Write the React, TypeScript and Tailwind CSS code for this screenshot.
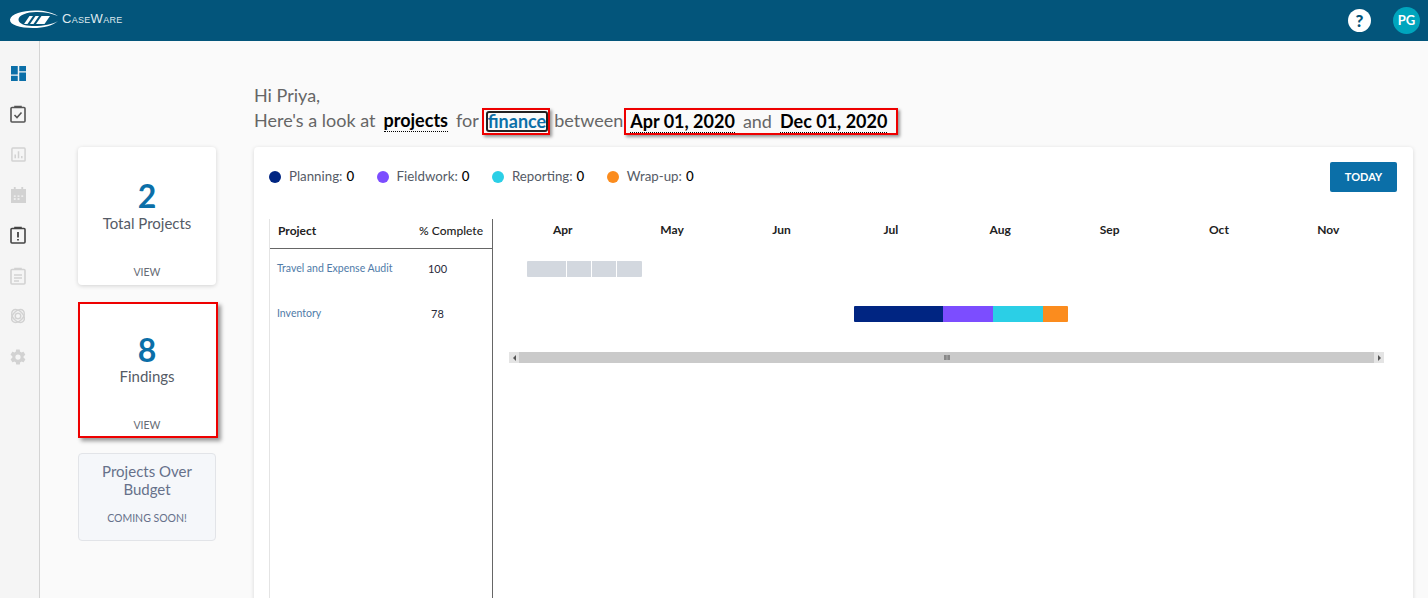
import React from 'react';

const legend = [
  { label: 'Planning:', color: 'bg-[#002582]' },
  { label: 'Fieldwork:', color: 'bg-[#7c4dff]' },
  { label: 'Reporting:', color: 'bg-[#2bcfe6]' },
  { label: 'Wrap-up:', color: 'bg-[#fb8c1e]' },
];

const months = ['Apr', 'May', 'Jun', 'Jul', 'Aug', 'Sep', 'Oct', 'Nov'];

const Logo = () => (
  <svg width="50" height="20" viewBox="0 0 50 20" className="shrink-0 -mt-[4px]">
    <path d="M1 10.500C2 5 13 1.500 26 1.500c9 0 18 2 23 5.500-6-2.500-14-4.200-22-4C18 3.200 9.500 6 9.500 10.500c0 4 6 6.300 13.500 6.500 10 .3 20-1.300 26-5-5 4.500-14 7-25 7C11 19 .5 16 1 10.500z" fill="#ffffff" />
    <path d="M15 15l5.500-8h3.500l-5.500 8zM21 15l5.500-8H30l-5.500 8zM27 15l5.500-8h8.500l-5.500 8z" fill="#ffffff" />
  </svg>
);

const DashboardIcon = () => (
  <svg width="15" height="15" viewBox="0 0 16 16">
    <path d="M0 0h7.200v9H0zM0 10.500h7.200V16H0zM8.800 0H16v5.500H8.800zM8.800 7H16v9H8.800z" fill="#0b6fa8" />
  </svg>
);

const Clipboard = ({ color, children }: { color: string; children?: React.ReactNode }) => (
  <svg width="16" height="18" viewBox="0 0 16 18" fill="none" stroke={color}>
    <rect x="1" y="2.500" width="14" height="14.500" rx="1" strokeWidth="1.600" />
    <path d="M5 3V1.500h6V3" strokeWidth="1.600" />
    {children}
  </svg>
);

const NavItem = ({ children }: { children: React.ReactNode }) => (
  <div className="h-[18px] flex items-center justify-center">{children}</div>
);

const SideNav = () => (
  <div className="w-10 shrink-0 bg-[#f5f5f5] border-r border-[#d4d4d4] flex flex-col items-center pt-[23px] pr-[3px] gap-[22.500px] h-[557px]">
    <NavItem><DashboardIcon /></NavItem>
    <NavItem>
      <Clipboard color="#555555">
        <path d="M4.500 10l2.500 2.500 4.500-5" strokeWidth="1.600" />
      </Clipboard>
    </NavItem>
    <NavItem>
      <svg width="15" height="15" viewBox="0 0 16 16" fill="none" stroke="#d2d2d2">
        <rect x="1" y="1" width="14" height="14" rx="1" strokeWidth="1.600" />
        <path d="M4.500 12V8M8 12V4.500M11.500 12V9.500" strokeWidth="1.600" />
      </svg>
    </NavItem>
    <NavItem>
      <svg width="15" height="17" viewBox="0 0 16 18">
        <path d="M0 3h3V1h2v2h6V1h2v2h3v15H0z" fill="#d2d2d2" />
        <path d="M3 10h2v1.500H3zM7 10h2v1.500H7zM11 10h2v1.500h-2zM3 13h2v1.500H3zM7 13h2v1.500H7z" fill="#f5f5f5" />
      </svg>
    </NavItem>
    <NavItem>
      <Clipboard color="#444444">
        <path d="M8 6v5.500M8 13v1.500" strokeWidth="1.800" />
      </Clipboard>
    </NavItem>
    <NavItem>
      <Clipboard color="#d2d2d2">
        <path d="M4 8h8M4 11h8M4 14h5" strokeWidth="1.300" />
      </Clipboard>
    </NavItem>
    <NavItem>
      <svg width="16" height="16" viewBox="0 0 16 16" fill="none" stroke="#d2d2d2" strokeWidth="1.500">
        <circle cx="8" cy="8" r="2.800" />
        <ellipse cx="8" cy="8" rx="7.500" ry="5" transform="rotate(45 8 8)" />
        <ellipse cx="8" cy="8" rx="7.500" ry="5" transform="rotate(-45 8 8)" />
      </svg>
    </NavItem>
    <NavItem>
      <svg width="18" height="18" viewBox="0 0 24 24">
        <path d="M19.400 13c.1-.3.100-.7.100-1s0-.7-.1-1l2.100-1.600c.2-.2.200-.4.100-.6l-2-3.500c-.1-.2-.4-.3-.6-.2l-2.500 1c-.5-.4-1.100-.7-1.700-1l-.4-2.600c0-.3-.2-.5-.5-.5h-4c-.3 0-.5.200-.5.400l-.4 2.700c-.6.200-1.100.6-1.700 1l-2.500-1c-.2-.1-.5 0-.6.200l-2 3.500c-.1.200-.1.500.1.600L4.500 11c0 .3-.1.700-.1 1s0 .7.100 1l-2.100 1.600c-.2.200-.2.400-.1.600l2 3.500c.1.200.4.300.6.200l2.500-1c.5.400 1.100.7 1.700 1l.4 2.600c0 .3.200.5.500.5h4c.3 0 .5-.2.500-.4l.4-2.700c.6-.2 1.200-.6 1.700-1l2.500 1c.2.100.5 0 .6-.2l2-3.500c.1-.2.100-.5-.1-.6zM12 15.500a3.500 3.500 0 1 1 0-7 3.500 3.500 0 0 1 0 7z" fill="#d2d2d2" />
      </svg>
    </NavItem>
  </div>
);

const StatCard = ({ value, label, outlined }: { value: string; label: string; outlined?: boolean }) => (
  <div className={outlined
    ? 'w-[140px] h-[136px] bg-white border-[2px] border-[#ee0000] shadow-[3px_3px_4px_rgba(0,0,0,0.4)] flex flex-col items-center pt-[27px] pr-[2px]'
    : 'w-[138px] h-[138px] bg-white rounded shadow-[0_1px_4px_rgba(0,0,0,0.16)] flex flex-col items-center pt-[30px]'}>
    <div className="text-[32px] leading-[38px] font-bold text-[#0b6fa8]">{value}</div>
    <div className={`text-[15px] leading-[20px] text-[#555b66] ${outlined ? '-mt-[3px]' : '-mt-[2px]'}`}>{label}</div>
    <div className={`mt-auto text-[10.500px] leading-[14px] text-[#666b75] ${outlined ? 'mb-[4px]' : 'mb-[6px]'}`}>VIEW</div>
  </div>
);

const Dotted = ({ children, className }: { children: React.ReactNode; className?: string }) => (
  <span className={`border-b border-dotted border-black font-bold leading-[22px] inline-block ${className ?? ''}`}>{children}</span>
);

export default function App() {
  return (
    <div className="w-[1428px] h-[598px] overflow-hidden bg-[#fafafa] font-['Lato','Open_Sans',sans-serif] text-[#333]">
      <header className="h-[41px] bg-[#03557b] flex items-center pl-[9px] pr-[8px]">
        <Logo />
        <span className="ml-[3px] -mt-[4px] text-[13px] tracking-[0.3px] font-light text-[#dfe9ee] font-['Liberation_Sans',sans-serif] [font-variant:small-caps]">CaseWare</span>
        <div className="ml-auto flex items-center gap-[22px]">
          <div className="w-[23px] h-[23px] rounded-full bg-white text-[#03557b] text-[17px] font-black flex items-center justify-center">?</div>
          <div className="w-[27px] h-[27px] rounded-full bg-[#00a5bd] text-white text-[13px] font-bold flex items-center justify-center">PG</div>
        </div>
      </header>
      <div className="flex">
        <SideNav />
        <div className="w-[38px] shrink-0" />
        <aside className="w-[176px] shrink-0 pt-[106px] flex flex-col gap-[17px]">
          <StatCard value="2" label="Total Projects" />
          <StatCard value="8" label="Findings" outlined />
          <div className="w-[138px] h-[88px] -mt-[2px] bg-[#f5f7fa] border border-[#e2e4e8] rounded flex flex-col items-center text-center pt-[8px]">
            <div className="text-[15px] leading-[18px] text-[#66718a] w-[110px]">Projects Over Budget</div>
            <div className="text-[10.500px] leading-[14px] text-[#66718a] mt-[13px]">COMING SOON!</div>
          </div>
        </aside>
        <main className="flex-1 pr-[15px]">
          <div className="pt-[42px] h-[106px] text-[18px] leading-[25px] text-[#666666]">
            <div>Hi Priya,</div>
            <div className="flex items-center whitespace-nowrap">
              <span className="-translate-y-[1px]">Here's a look at</span>
              <Dotted className="ml-[8px] text-black -translate-y-[1px]">projects</Dotted>
              <span className="ml-[8px] -translate-y-[1px]">for</span>
              <span className="ml-[3px] pl-[2px] h-[27px] border-[2px] border-[#ee0000] shadow-[2px_2px_3px_rgba(0,0,0,0.4)] flex items-center">
                <span className="border-[2px] border-[#222] rounded-[3px] h-[21px] flex items-center font-bold text-[#0b6fa8] leading-none pb-[1px]">finance</span>
              </span>
              <span className="ml-[4px] -translate-y-[1px]">between</span>
              <span className="ml-[1px] pl-[4px] pr-[5px] pb-[1px] h-[27px] border-[2px] border-[#ee0000] shadow-[2px_2px_3px_rgba(0,0,0,0.4)] flex items-center">
                <Dotted className="text-black">Apr 01, 2020</Dotted>
                <span className="ml-[8px]">and</span>
                <Dotted className="ml-[8px] mr-[4px] text-black">Dec 01, 2020</Dotted>
              </span>
            </div>
          </div>
          <section className="h-[500px] bg-white rounded shadow-[0_1px_4px_rgba(0,0,0,0.14)] pl-[15px]">
            <div className="flex items-center h-[60px] mb-[12px] pr-[16px]">
              <div className="flex items-center gap-[22.500px] text-[13.300px] text-[#555b66]">
                {legend.map((item) => (
                  <div key={item.label} className="flex items-center">
                    <span className={`w-3 h-3 rounded-full ${item.color} mr-[8px]`} />
                    {item.label}<span className="ml-[4px] font-medium text-black">0</span>
                  </div>
                ))}
              </div>
              <button className="ml-auto w-[67px] h-[30px] bg-[#0b6fa8] rounded-[2px] text-white text-[11px] font-bold">TODAY</button>
            </div>
            <div className="flex">
              <div className="w-[224px] h-[400px] border-l border-r border-l-[#e4e4e4] border-r-[#666666] shrink-0">
                <div className="h-[30px] pb-[6px] border-b border-[#666666] flex items-center text-[12px] font-bold text-[#222] pl-[8px] pr-[9px] justify-between">
                  <span>Project</span><span className="font-medium">% Complete</span>
                </div>
                <div className="flex h-[45px] pb-[5px] items-center text-[10.500px]">
                  <span className="w-[140px] pl-[7px] text-[#4f7ba8] whitespace-nowrap">Travel and Expense Audit</span>
                  <span className="flex-1 text-center text-[#2a2a3a] pr-[27px] pt-[1px] text-[11px]">100</span>
                </div>
                <div className="flex h-[45px] pb-[5px] items-center text-[10.500px]">
                  <span className="w-[140px] pl-[7px] text-[#4f7ba8]">Inventory</span>
                  <span className="flex-1 text-center text-[#2a2a3a] pr-[27px] pt-[1px] text-[11px]">78</span>
                </div>
              </div>
              <div className="flex-1 pl-[16px] pr-[14px]">
                <div className="h-[30px] pb-[6px] grid grid-cols-8 w-[875px] text-[12px] font-bold text-[#222] text-center items-center -mt-[1px]">
                  {months.map((m) => <span key={m} className="-translate-x-[1px]">{m}</span>)}
                </div>
                <div className="flex h-[16px] mt-[13px] ml-[18px] gap-[1px]">
                  <div className="w-[39px] bg-[#d3d8df] rounded-l-[1px]" />
                  <div className="w-[24px] bg-[#d3d8df]" />
                  <div className="w-[24px] bg-[#d3d8df]" />
                  <div className="w-[25px] bg-[#d3d8df] rounded-r-[1px]" />
                </div>
                <div className="flex h-[16px] mt-[29px] ml-[345px]">
                  <div className="w-[89px] bg-[#002582] rounded-l-[1px]" />
                  <div className="w-[50px] bg-[#7c4dff]" />
                  <div className="w-[50px] bg-[#2bcfe6]" />
                  <div className="w-[25px] bg-[#fb8c1e] rounded-r-[1px]" />
                </div>
                <div className="h-[11px] mt-[30px] w-[875px] bg-[#cacaca] flex items-center justify-between">
                  <span className="w-[10px] h-full bg-[#e4e4e4] flex items-center justify-center">
                    <span className="border-y-[3px] border-y-transparent border-r-[3px] border-r-[#555]" />
                  </span>
                  <span className="w-[6px] h-[5px] border-x-2 border-[#888] bg-[#999]" />
                  <span className="w-[10px] h-full bg-[#e4e4e4] flex items-center justify-center">
                    <span className="border-y-[3px] border-y-transparent border-l-[3px] border-l-[#555]" />
                  </span>
                </div>
              </div>
            </div>
          </section>
        </main>
      </div>
    </div>
  );
}
